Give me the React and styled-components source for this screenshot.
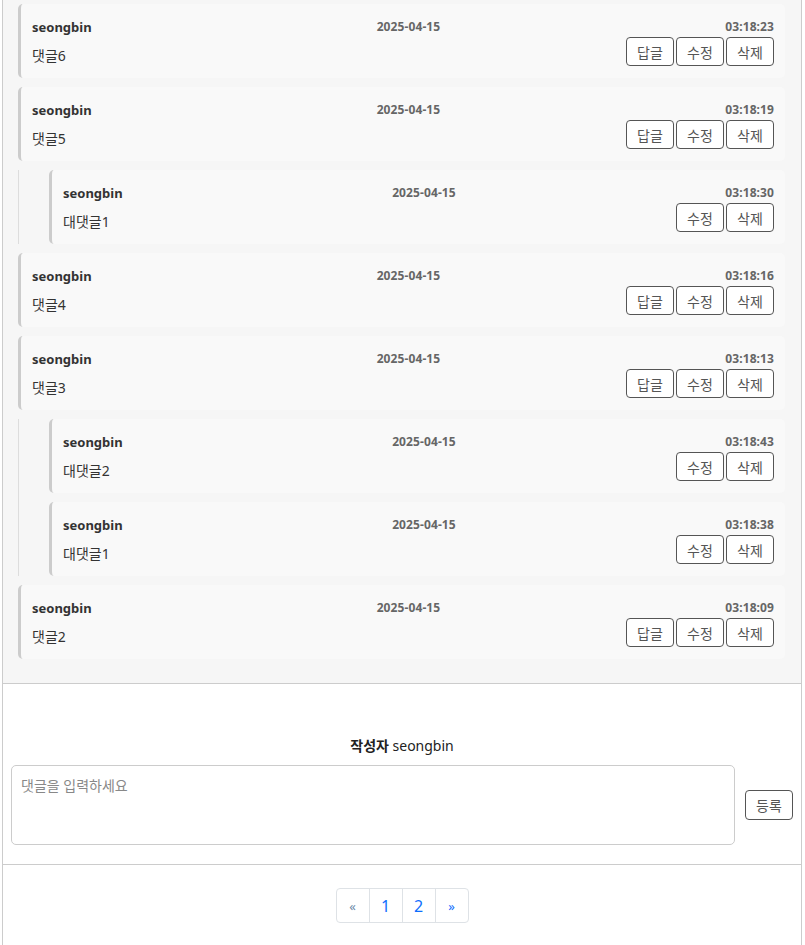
import styled, { createGlobalStyle } from "styled-components";

const GlobalStyle = createGlobalStyle`
    body {
        margin: 0;
        background: #fff;
        font-family: "Noto Sans", "Noto Sans CJK KR", sans-serif;
        color: #333;
    }
`;

const Page = styled.div`
    box-sizing: border-box;
    margin-left: 2px;
    width: 800px;
    min-height: 100vh;
    border-left: 1px solid #ccc;
    border-right: 1px solid #ccc;
`;

const CommentList = styled.div`
    background: #f6f6f6;
    padding: 4px 16px 24px 15px;
    border-bottom: 1px solid #ccc;
    display: flex;
    flex-direction: column;
    gap: 9px;
`;

const ReplyGroup = styled.div`
    border-left: 1px solid #ddd;
    padding-left: 30px;
    display: flex;
    flex-direction: column;
    gap: 9px;
`;

const Card = styled.div`
    background: #f9f9f9;
    border-left: 3px solid #ccc;
    border-radius: 5px;
    padding: 14px 11px 12px;
`;

const CardHeader = styled.div`
    display: flex;
    justify-content: space-between;
    line-height: 18px;
    height: 18px;

    .name {
        font-size: 13px;
        font-weight: 700;
        color: #333;
    }
    .date,
    .time {
        font-size: 12px;
        font-weight: 700;
        letter-spacing: 0.1px;
        color: #666;
    }
`;

const CardBody = styled.div`
    margin-top: 1px;
    display: flex;
    justify-content: space-between;
    align-items: flex-end;
    font-size: 14px;
    line-height: 20px;
    color: #333;
`;

const Actions = styled.div`
    display: flex;
    gap: 2px;
`;

const SmallButton = styled.button`
    box-sizing: border-box;
    height: 29px;
    width: 48px;
    padding: 0;
    font-family: inherit;
    font-size: 14px;
    color: #555;
    background: #fff;
    border: 1px solid #555;
    border-radius: 4px;
`;

const FormSection = styled.div`
    padding: 52px 8px 19px 8px;
    border-bottom: 1px solid #ccc;

    .writer {
        text-align: center;
        font-size: 14px;
        line-height: 20px;
        margin-bottom: 9px;
        color: #222;
        b {
            font-weight: 700;
        }
    }
`;

const FormRow = styled.div`
    display: flex;
    align-items: center;
    gap: 10px;
`;

const TextArea = styled.textarea`
    box-sizing: border-box;
    flex: 1;
    height: 80px;
    resize: none;
    padding: 9px 9px;
    font-family: inherit;
    font-size: 14px;
    border: 1px solid #ccc;
    border-radius: 5px;
    background: #fff;
    &::placeholder {
        color: #888;
    }
`;

const SubmitButton = styled(SmallButton)`
    height: 30px;
    width: 48px;
    font-size: 14px;
`;

const PaginationWrap = styled.div`
    display: flex;
    justify-content: center;
    padding-top: 23px;
`;

const Pagination = styled.ul`
    display: flex;
    list-style: none;
    margin: 0;
    padding: 0;
    border: 1px solid #dee2e6;
    border-radius: 4px;
`;

const PageItem = styled.li`
    width: 32px;
    height: 33px;
    display: flex;
    align-items: center;
    justify-content: center;
    font-size: ${(p) => (p.$arrow ? "13px" : "16px")};
    color: ${(p) => (p.$disabled ? "#6c8aa8" : "#0d6efd")};
    & + & {
        border-left: 1px solid #dee2e6;
    }
`;

const comments = [
    { text: "댓글6", time: "03:18:23" },
    {
        text: "댓글5",
        time: "03:18:19",
        replies: [{ text: "대댓글1", time: "03:18:30" }],
    },
    { text: "댓글4", time: "03:18:16" },
    {
        text: "댓글3",
        time: "03:18:13",
        replies: [
            { text: "대댓글2", time: "03:18:43" },
            { text: "대댓글1", time: "03:18:38" },
        ],
    },
    { text: "댓글2", time: "03:18:09" },
];

const CommentCard = ({ text, time, reply }) => (
    <Card>
        <CardHeader>
            <span className="name">seongbin</span>
            <span className="date">2025-04-15</span>
            <span className="time">{time}</span>
        </CardHeader>
        <CardBody>
            <span>{text}</span>
            <Actions>
                {!reply && <SmallButton>답글</SmallButton>}
                <SmallButton>수정</SmallButton>
                <SmallButton>삭제</SmallButton>
            </Actions>
        </CardBody>
    </Card>
);

export default function App() {
    return (
        <>
            <GlobalStyle />
            <Page>
                <CommentList>
                    {comments.map((c, i) => [
                        <CommentCard key={"c" + i} text={c.text} time={c.time} />,
                        c.replies && (
                            <ReplyGroup key={"r" + i}>
                                {c.replies.map((r, j) => (
                                    <CommentCard key={j} text={r.text} time={r.time} reply />
                                ))}
                            </ReplyGroup>
                        ),
                    ])}
                </CommentList>
                <FormSection>
                    <div className="writer">
                        <b>작성자</b> seongbin
                    </div>
                    <FormRow>
                        <TextArea placeholder="댓글을 입력하세요" />
                        <SubmitButton>등록</SubmitButton>
                    </FormRow>
                </FormSection>
                <PaginationWrap>
                    <Pagination>
                        <PageItem $arrow $disabled>«</PageItem>
                        <PageItem>1</PageItem>
                        <PageItem>2</PageItem>
                        <PageItem $arrow>»</PageItem>
                    </Pagination>
                </PaginationWrap>
            </Page>
        </>
    );
}
